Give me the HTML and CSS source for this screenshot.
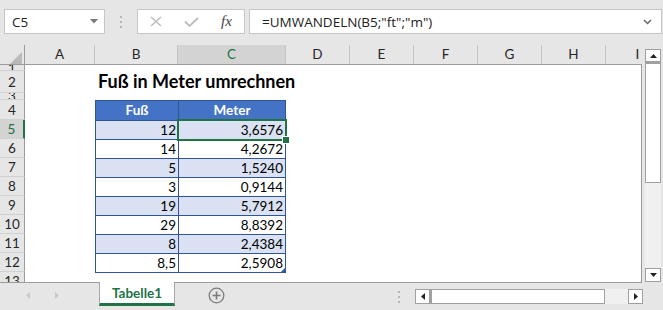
FILE: index.html
```html
<!DOCTYPE html>
<html lang="de">
<head>
  <meta charset="UTF-8">
  <title>Fuß in Meter umrechnen</title>
  <link rel="stylesheet" href="styles.css">
</head>
<body>
  <div class="formula-bar">
    <div class="namebox">
      <span>C5</span>
      <svg width="8" height="5" viewBox="0 0 8 5"><path d="M0 0h8L4 4.5z" fill="#777"/></svg>
    </div>
    <div class="grip"><i></i><i></i><i></i></div>
    <div class="fx-buttons">
      <svg class="ic-cross" width="12" height="11" viewBox="0 0 12 11"><path d="M1 1l10 9M11 1L1 10" stroke="#bdbdbd" stroke-width="1.5" fill="none"/></svg>
      <svg class="ic-check" width="15" height="10" viewBox="0 0 15 10"><path d="M1 4.5l4.5 4.5L14 1" stroke="#bdbdbd" stroke-width="1.8" fill="none"/></svg>
      <span class="fx">fx</span>
    </div>
    <div class="formula">
      <span>=UMWANDELN(B5;"ft";"m")</span>
      <svg width="9" height="6" viewBox="0 0 9 6"><path d="M1 1l3.5 3.5L8 1" stroke="#666" stroke-width="1.5" fill="none"/></svg>
    </div>
  </div>

  <div class="main">
    <div class="sheet">
      <div class="col-heads">
        <div class="corner"><svg width="12" height="12" viewBox="0 0 12 12"><path d="M12 0V12H0z" fill="#b9b9b9"/></svg></div>
        <div class="col-head">A</div>
        <div class="col-head">B</div>
        <div class="col-head active">C</div>
        <div class="col-head">D</div>
        <div class="col-head">E</div>
        <div class="col-head">F</div>
        <div class="col-head">G</div>
        <div class="col-head">H</div>
        <div class="col-head">I</div>
      </div>

      <div class="grid">
        <div class="title">Fuß in Meter umrechnen</div>

        <div class="tbl">
          <div class="th">Fuß</div><div class="th">Meter</div>
          <div class="td band">12</div><div class="td band sel">3,6576</div>
          <div class="td">14</div><div class="td">4,2672</div>
          <div class="td band">5</div><div class="td band">1,5240</div>
          <div class="td">3</div><div class="td">0,9144</div>
          <div class="td band">19</div><div class="td band">5,7912</div>
          <div class="td">29</div><div class="td">8,8392</div>
          <div class="td band">8</div><div class="td band">2,4384</div>
          <div class="td">8,5</div><div class="td last">2,5908</div>
        </div>

        <div class="row-head"><span>1</span></div>
        <div class="row-head"><span>2</span></div>
        <div class="row-head"><span>3</span></div>
        <div class="row-head"><span>4</span></div>
        <div class="row-head active"><span>5</span></div>
        <div class="row-head"><span>6</span></div>
        <div class="row-head"><span>7</span></div>
        <div class="row-head"><span>8</span></div>
        <div class="row-head"><span>9</span></div>
        <div class="row-head"><span>10</span></div>
        <div class="row-head"><span>11</span></div>
        <div class="row-head"><span>12</span></div>
        <div class="row-head cut"><span>13</span></div>
      </div>
    </div>

    <div class="vscroll">
      <div class="sbtn"><svg width="7" height="4" viewBox="0 0 7 4"><path d="M0 4L3.5 0 7 4z" fill="#222"/></svg></div>
      <div class="vthumb"></div>
      <div class="vtrack"></div>
      <div class="sbtn down"><svg width="7" height="4" viewBox="0 0 7 4"><path d="M0 0h7L3.5 4z" fill="#222"/></svg></div>
    </div>
  </div>

  <div class="tab-bar">
    <div class="tab-nav">
      <svg width="4" height="7" viewBox="0 0 4 7"><path d="M4 0v7L0 3.5z" fill="#c8c8c8"/></svg>
      <svg width="4" height="7" viewBox="0 0 4 7"><path d="M0 0v7L4 3.5z" fill="#c8c8c8"/></svg>
    </div>
    <div class="tab">Tabelle1</div>
    <svg class="add" width="17" height="17" viewBox="0 0 17 17"><circle cx="8.5" cy="8.5" r="7.3" stroke="#7b7b7b" stroke-width="1.3" fill="none"/><path d="M8.5 4.5v8M4.5 8.5h8" stroke="#7b7b7b" stroke-width="1.6"/></svg>
    <div class="hsplit"><i></i><i></i><i></i></div>
    <div class="hscroll">
      <div class="sbtn"><svg width="4" height="7" viewBox="0 0 4 7"><path d="M4 0v7L0 3.5z" fill="#222"/></svg></div>
      <div class="hthumb"></div>
      <div class="htrack"></div>
      <div class="sbtn"><svg width="4" height="7" viewBox="0 0 4 7"><path d="M0 0v7L4 3.5z" fill="#222"/></svg></div>
    </div>
  </div>
</body>
</html>
```

FILE: styles.css
```css
* { box-sizing: border-box; }
body { margin: 0; width: 663px; height: 310px; overflow: hidden; background: #e6e6e6; font-family: Lato, "Liberation Sans", sans-serif; color: #000; }

/* formula bar */
.formula-bar { display: flex; align-items: center; height: 45px; padding: 0 1px 2px 4px; font-family: "Open Sans", sans-serif; font-size: 13.5px; color: #222; }
.namebox { width: 101px; height: 25px; background: #fff; border: 1px solid #c6c6c6; display: flex; align-items: center; justify-content: space-between; padding: 0 6px 0 7px; }
.grip { width: 32px; display: flex; flex-direction: column; align-items: center; gap: 3px; }
.grip i, .hsplit i { display: block; width: 2px; height: 2px; background: #b5b5b5; }
.fx-buttons { width: 108px; height: 25px; background: #fff; border: 1px solid #c6c6c6; display: flex; align-items: center; }
.ic-cross { margin-left: 12px; }
.ic-check { margin-left: 22px; }
.fx { margin-left: 22px; font-family: "Liberation Serif", serif; font-style: italic; font-size: 15px; color: #444; }
.formula { flex: 1; margin-left: 4px; height: 25px; background: #fff; border: 1px solid #c6c6c6; display: flex; align-items: center; justify-content: space-between; padding: 0 9px 0 12px; }

/* sheet */
.main { display: flex; height: 238px; }
.sheet { width: 642px; }
.col-heads, .grid { display: grid; grid-template-columns: 25px 70px 83px 108px repeat(6, 64px); overflow: hidden; }
.col-heads { height: 20px; border-bottom: 1px solid #9b9b9b; font-size: 13.5px; color: #262626; }
.corner { border-right: 1px solid #9b9b9b; display: flex; align-items: flex-end; justify-content: flex-end; padding: 0 2px 2px 0; }
.col-head { border-right: 1px solid #c4c4c4; text-align: center; line-height: 19px; }
.col-head.active { background: #d3d3d3; color: #217346; border-bottom: 2px solid #217346; }

.grid { grid-template-rows: 6px 22px 7px 20px repeat(8, 19px) 1fr; height: 218px; background: #fff; border-right: 1px solid #9b9b9b; border-bottom: 1px solid #9b9b9b; }
.row-head { grid-column: 1; background: #e6e6e6; border-right: 1px solid #9b9b9b; border-bottom: 1px solid #d0d0d0; display: flex; align-items: center; justify-content: center; overflow: hidden; font-size: 13.5px; color: #262626; }
.row-head.active { background: #d3d3d3; color: #217346; border-right: 2px solid #217346; }
.row-head.cut { align-items: flex-start; border-bottom: none; }
.row-head.cut span { line-height: 19px; }

.title { grid-row: 2; grid-column: 3 / 8; align-self: end; padding-left: 3px; margin-bottom: 1px; font-size: 18px; font-weight: bold; line-height: 21px; white-space: nowrap; }

.tbl { grid-row: 4 / 14; grid-column: 3 / 5; align-self: start; display: grid; grid-template-columns: 83px 107px; grid-template-rows: 20px repeat(8, 19px); border-left: 1px solid #2f5597; border-bottom: 1px solid #2f5597; font-size: 13.5px; }
.th, .td { border-top: 1px solid #2f5597; border-right: 1px solid #2f5597; }
.th { background: #4472c4; color: #fff; font-weight: bold; text-align: center; line-height: 19px; }
.td { text-align: right; padding-right: 2px; line-height: 17px; padding-top: 1px; }
.band { background: #d9e1f2; }
.sel { position: relative; }
.sel::before { content: ""; position: absolute; left: -2px; top: -2px; right: -2px; bottom: -2px; border: 2px solid #217346; }
.sel::after { content: ""; position: absolute; right: -5px; bottom: -5px; width: 6px; height: 6px; background: #217346; border: 1px solid #fff; }
.last { position: relative; }
.last::after { content: ""; position: absolute; right: 0; bottom: 0; border-left: 4px solid transparent; border-bottom: 4px solid #2f5597; }

/* scroll bars */
.vscroll { width: 21px; padding: 4px 2px 1px 3px; display: flex; flex-direction: column; }
.sbtn { background: #fff; border: 1px solid #a0a0a0; display: flex; align-items: center; justify-content: center; }
.vscroll .sbtn { height: 13px; }
.vscroll .sbtn.down { height: 14px; }
.vthumb { height: 121px; background: #fff; border: 1px solid #a0a0a0; border-top-width: 2px; }
.vtrack { flex: 1; background: #f0f0f0; }

/* sheet tabs */
.tab-bar { display: flex; align-items: flex-start; height: 27px; }
.tab-nav { width: 99px; height: 25px; display: flex; align-items: center; padding-left: 26px; gap: 25px; }
.tab { width: 76px; height: 24px; margin-top: -1px; background: #fff; border-left: 1px solid #a6a6a6; border-right: 1px solid #a6a6a6; border-bottom: 3px solid #217346; text-align: center; line-height: 22px; font-size: 13.5px; font-weight: bold; color: #217346; }
.add { margin: 4px 0 0 33px; }
.hsplit { margin: 8px 0 0 173px; display: flex; flex-direction: column; gap: 3px; }
.hscroll { margin: 6px 0 0 15px; width: 228px; height: 15px; display: flex; }
.hscroll .sbtn { width: 15px; }
.hthumb { width: 175px; background: #fff; border: 1px solid #a0a0a0; border-left-width: 2px; }
.htrack { width: 23px; background: #f0f0f0; }
```
